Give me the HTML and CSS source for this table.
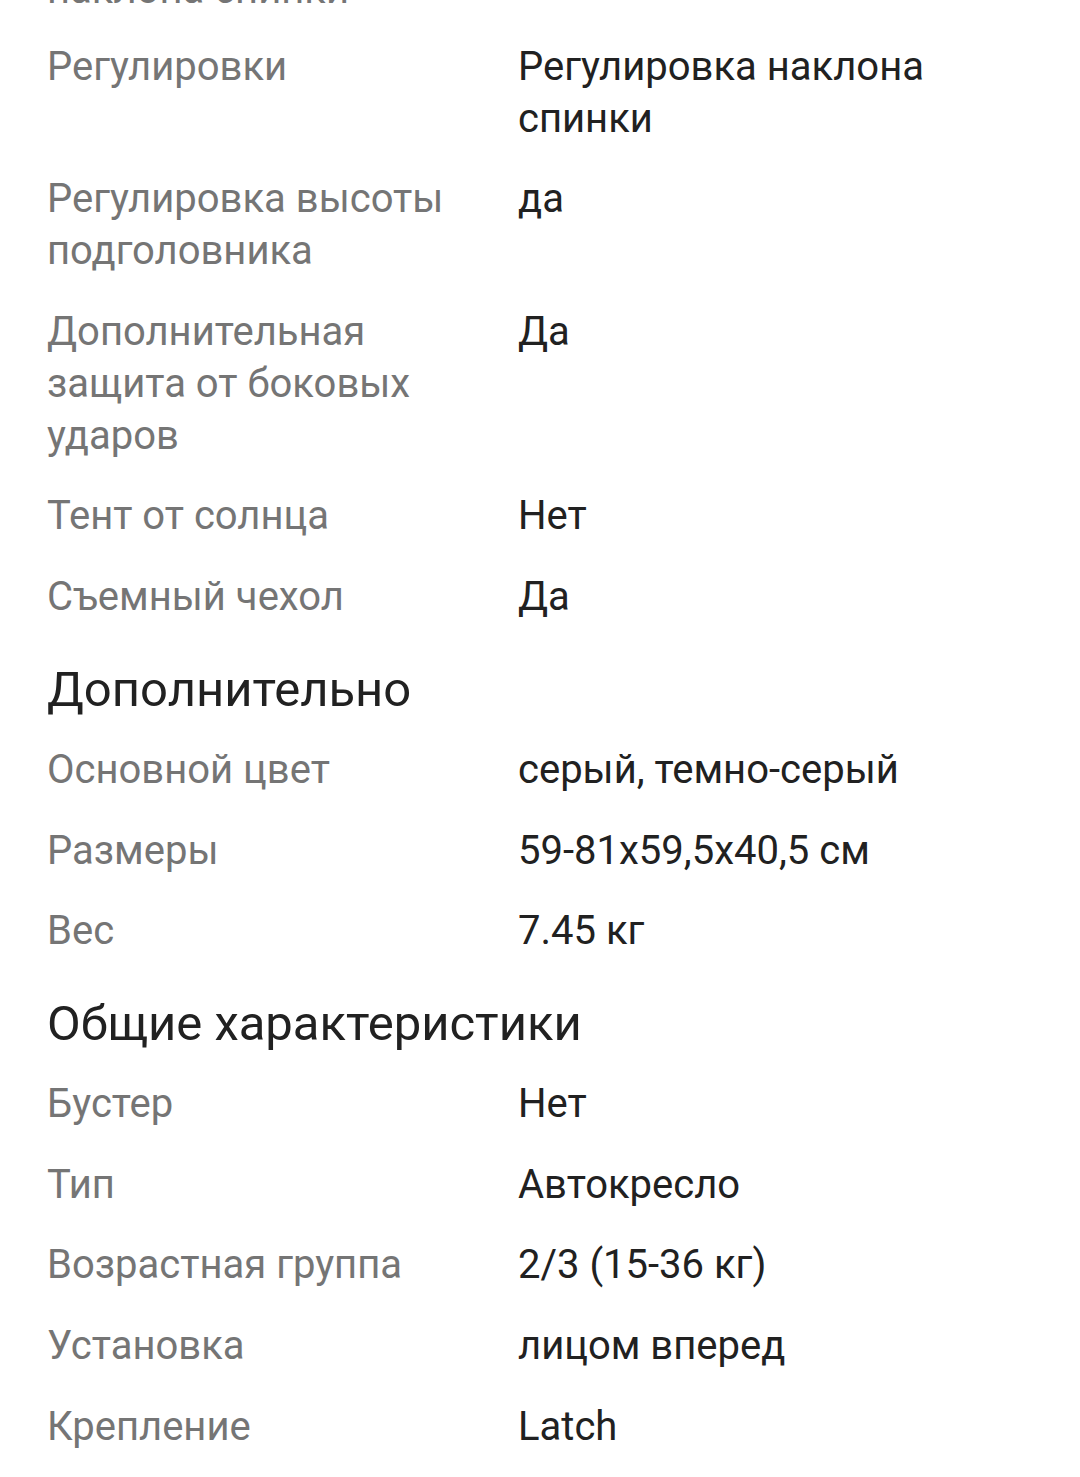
FILE: index.html
```html
<!DOCTYPE html>
<html lang="ru">
<head>
<meta charset="utf-8">
<title>Характеристики</title>
<link rel="stylesheet" href="styles.css">
</head>
<body>
<div class="specs">
  <dl class="spec-list">
    <dt class="spec-name spec-cut">наклона спинки</dt>
    <dd class="spec-value spec-cut"></dd>
    <dt class="spec-name">Регулировки</dt>
    <dd class="spec-value">Регулировка наклона спинки</dd>
    <dt class="spec-name">Регулировка высоты подголовника</dt>
    <dd class="spec-value">да</dd>
    <dt class="spec-name">Дополнительная защита от боковых ударов</dt>
    <dd class="spec-value">Да</dd>
    <dt class="spec-name">Тент от солнца</dt>
    <dd class="spec-value">Нет</dd>
    <dt class="spec-name">Съемный чехол</dt>
    <dd class="spec-value">Да</dd>
  </dl>

  <h2 class="spec-title">Дополнительно</h2>
  <dl class="spec-list">
    <dt class="spec-name">Основной цвет</dt>
    <dd class="spec-value">серый, темно-серый</dd>
    <dt class="spec-name">Размеры</dt>
    <dd class="spec-value">59-81x59,5x40,5 см</dd>
    <dt class="spec-name">Вес</dt>
    <dd class="spec-value">7.45 кг</dd>
  </dl>

  <h2 class="spec-title">Общие характеристики</h2>
  <dl class="spec-list">
    <dt class="spec-name">Бустер</dt>
    <dd class="spec-value">Нет</dd>
    <dt class="spec-name">Тип</dt>
    <dd class="spec-value">Автокресло</dd>
    <dt class="spec-name">Возрастная группа</dt>
    <dd class="spec-value">2/3 (15-36 кг)</dd>
    <dt class="spec-name">Установка</dt>
    <dd class="spec-value">лицом вперед</dd>
    <dt class="spec-name">Крепление</dt>
    <dd class="spec-value">Latch</dd>
  </dl>
</div>
</body>
</html>
```

FILE: styles.css
```css
html, body {
    margin: 0;
    padding: 0;
    background: #fff;
}
body {
    font-family: Roboto, "Noto Sans", "Liberation Sans", sans-serif;
    font-size: 40px;
    line-height: 52px;
    color: #212121;
    overflow: hidden;
}
.specs {
    padding: 0 40px 0 47px;
    margin-top: -36px;
}
.spec-list {
    display: grid;
    grid-template-columns: 440px 1fr;
    column-gap: 31px;
    row-gap: 28.6px;
    margin: 0;
}
.spec-name {
    color: #757575;
}
.spec-value {
    margin: 0;
    color: #212121;
}
/* row scrolled out above the top edge */
.spec-cut {
    margin-bottom: -4px;
}
.spec-title {
    font-size: 49px;
    font-weight: 400;
    line-height: 58px;
    margin: 38px 0 25px;
    color: #212121;
}
```
